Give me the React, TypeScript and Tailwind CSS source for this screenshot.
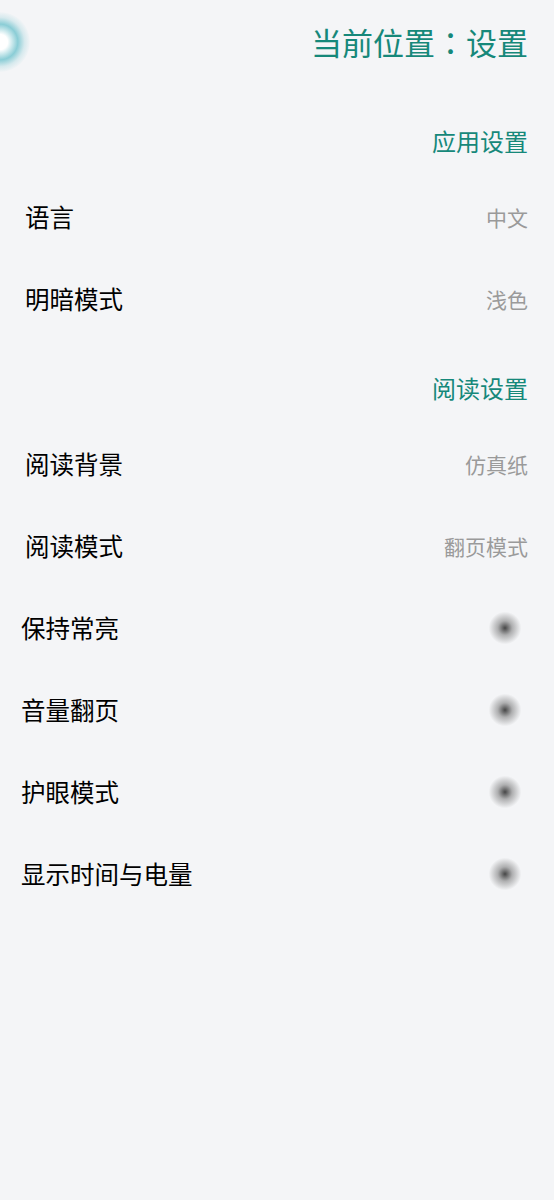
const font = "font-['Noto_Sans_CJK_SC','Noto_Sans',sans-serif]";

function Section({ title, height }: { title: string; height: string }) {
    return (
        <div className={`flex items-end justify-end pr-[26px] pb-[18px] ${height}`}>
            <span className="text-[24px] leading-[34px] text-[#16887a]">{title}</span>
        </div>
    );
}

function ValueRow({ label, value }: { label: string; value: string }) {
    return (
        <div className="h-[82px] flex items-center justify-between pl-[25px] pr-[26px]">
            <span className="text-[24.5px] leading-[34px] text-black">{label}</span>
            <span className="text-[21px] leading-[30px] text-[#9a9a9a]">{value}</span>
        </div>
    );
}

function ToggleRow({ label }: { label: string }) {
    return (
        <div className="h-[82px] flex items-center justify-between pl-[21px] pr-[32px]">
            <span className="text-[24.5px] leading-[34px] text-black">{label}</span>
            <div className="w-[34px] h-[34px] rounded-full bg-[radial-gradient(circle,rgba(40,40,40,0.85)_0%,rgba(90,90,90,0.45)_30%,rgba(160,160,160,0)_68%)]" />
        </div>
    );
}

export default function App() {
    return (
        <div className={`relative min-h-[1200px] w-full bg-[#f4f5f7] overflow-hidden ${font}`}>
            <div className="absolute left-[-30px] top-[12px] w-[60px] h-[60px] rounded-full bg-[radial-gradient(circle,#ffffff_0%,#ffffff_18%,rgba(120,198,208,0.85)_42%,rgba(160,212,220,0.35)_58%,rgba(170,215,222,0)_72%)]" />
            <div className="h-[84px] flex items-center justify-end pr-[26px]">
                <span className="text-[31px] leading-[42px] text-[#16887a] font-['Noto_Sans_CJK_TC','Noto_Sans_CJK_SC',sans-serif]">当前位置：设置</span>
            </div>
            <Section title="应用设置" height="h-[92px]" />
            <ValueRow label="语言" value="中文" />
            <ValueRow label="明暗模式" value="浅色" />
            <Section title="阅读设置" height="h-[83px]" />
            <ValueRow label="阅读背景" value="仿真纸" />
            <ValueRow label="阅读模式" value="翻页模式" />
            <ToggleRow label="保持常亮" />
            <ToggleRow label="音量翻页" />
            <ToggleRow label="护眼模式" />
            <ToggleRow label="显示时间与电量" />
        </div>
    );
}
